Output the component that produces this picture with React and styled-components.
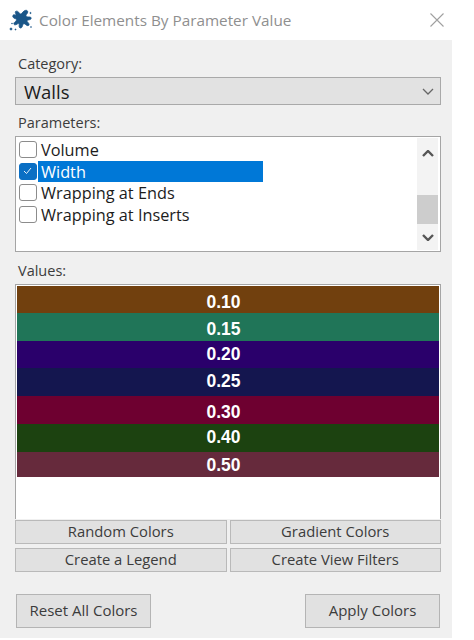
import React from 'react'
import styled, { createGlobalStyle } from 'styled-components'

const Global = createGlobalStyle`
  html, body {
    margin: 0;
    padding: 0;
    background: #fff;
  }
  body {
    font-family: 'Open Sans', 'Liberation Sans', sans-serif;
  }
`

const Page = styled.div`
  width: 474px;
  height: 640px;
  overflow: hidden;
  background: #fff;
`

const Window = styled.div`
  width: 452px;
`

const TitleBar = styled.div`
  height: 40px;
  display: flex;
  align-items: center;
  padding: 0 8px 0 9px;
`

const Title = styled.span`
  margin-left: 6px;
  flex: 1;
  font-size: 15.3px;
  color: #8f8f8f;
  white-space: nowrap;
`

const Body = styled.div`
  height: 598px;
  box-sizing: border-box;
  background: #f0f0f0;
  padding: 15px 11px 0 15px;
  display: flex;
  flex-direction: column;
`

const Label = styled.div`
  height: 22px;
  flex-shrink: 0;
  line-height: 17px;
  padding-left: 3px;
  font-size: 14.5px;
  color: #3c3c3c;
`

const Combo = styled.div`
  height: 28px;
  flex-shrink: 0;
  box-sizing: border-box;
  border: 1.5px solid #a9a9a9;
  background: #e2e2e2;
  display: flex;
  align-items: center;
  justify-content: space-between;
  padding: 0 6px 0 8px;
  font-size: 18.5px;
  color: #1a1a1a;
  margin-bottom: 9px;
`

const ListBox = styled.div`
  height: 116px;
  flex-shrink: 0;
  box-sizing: border-box;
  border: 1.5px solid #a5a5a5;
  background: #fff;
  display: flex;
  margin-bottom: 10px;
`

const Items = styled.div`
  flex: 1;
  padding: 2px 0 0 2.5px;
`

const Item = styled.div`
  height: 21.6px;
  display: flex;
  align-items: center;
  font-size: 16.3px;
  color: #1c1c1c;
`

const Check = styled.span`
  width: 18px;
  height: 17px;
  box-sizing: border-box;
  border: 1px solid ${p => (p.$checked ? '#0a6fc4' : '#8c8c8c')};
  border-radius: 3px;
  background: ${p => (p.$checked ? '#0a6fc4' : '#fff')};
  display: flex;
  align-items: center;
  justify-content: center;
  margin-right: 1px;
`

const ItemText = styled.span`
  width: 225px;
  height: 100%;
  box-sizing: border-box;
  padding-left: 3.5px;
  line-height: 23px;
  white-space: nowrap;
  background: ${p => (p.$selected ? '#0078d7' : 'transparent')};
  color: ${p => (p.$selected ? '#fff' : 'inherit')};
`

const ScrollBar = styled.div`
  width: 21px;
  margin: 1px 2px 1.5px 0;
  padding-top: 3px;
  background: #f3f3f3;
  display: flex;
  flex-direction: column;
  align-items: center;
`

const ScrollArrow = styled.div`
  height: 24px;
  display: flex;
  align-items: center;
`

const ScrollThumb = styled.div`
  width: 100%;
  height: 29px;
  margin: 30px 0 auto;
  background: #cdcdcd;
`

const ValuesBox = styled.div`
  height: 235px;
  flex-shrink: 0;
  box-sizing: border-box;
  border: 1.5px solid #a5a5a5;
  border-bottom: none;
  background: #fff;
  padding: 0.5px 1.5px 0 0.5px;
  margin-bottom: 1px;
  display: flex;
  flex-direction: column;
`

const ValueRow = styled.div`
  height: ${p => p.$height}px;
  box-sizing: border-box;
  padding-right: 8px;
  padding-top: ${p => p.$nudge}px;
  background: ${p => p.$color};
  color: #fff;
  font-family: 'Liberation Sans', Arial, sans-serif;
  font-weight: bold;
  font-size: 17.5px;
  display: flex;
  align-items: center;
  justify-content: center;
  flex-shrink: 0;
`

const ButtonGrid = styled.div`
  display: grid;
  grid-template-columns: 1fr 1fr;
  gap: 4px 3px;
`

const GridButton = styled.div`
  height: 24px;
  box-sizing: border-box;
  border: 1px solid #b9b9b9;
  padding-bottom: 2px;
  background: #e1e1e1;
  display: flex;
  align-items: center;
  justify-content: center;
  font-size: 14.8px;
  color: #3c3c3c;
`

const Footer = styled.div`
  display: flex;
  justify-content: space-between;
  margin-top: 22px;
  padding: 0 1px;
`

const FooterButton = styled(GridButton)`
  width: 135px;
  height: 34px;
  border: 1.5px solid #b4b4b4;
  font-size: 15px;
`

const SplatIcon = () => (
  <svg width="24" height="24" viewBox="0 0 24 24" fill="#1a5688" stroke="#1a5688" strokeWidth="0.8">
    <path d="M6.500 3.500c1.500-1 3 .2 3.800 1.600.8 1.200 1.700 1.200 2.500.2 1.200-1.500 3-3.500 5-2.900 1.600.6 1 2.500-.1 3.700-1 1.100-1 2.200.2 2.700 1.400.5 4-.5 4.300 1.200.2 1.500-1.800 1.800-3.100 2-1.200.2-1.400 1.100-.6 2 1 1 2.200 2.300 1.300 3.300-1 1-2.500-.2-3.600-1.100-1.100-.9-2-.7-2.400.6-.4 1.300-.7 3.300-2.400 3.200-1.500-.2-1.300-2-1.200-3.300.1-1.200-.8-1.500-1.800-.8-1 .7-2.700 1.500-3.400.4-.7-1.200.8-2.300 1.800-3.100 1-.9.900-1.800-.1-2.400C4.300 10.300 3.100 8.500 4 7.300c.8-1 2-.4 2.900-.1.600-.8-1.200-2.500-.4-3.700z" />
    <circle cx="2" cy="21" r="1" />
    <circle cx="6.500" cy="21.500" r="0.500" />
    <circle cx="21.500" cy="5" r="0.600" />
    <circle cx="3" cy="15.500" r="0.400" />
    <circle cx="22" cy="19" r="0.400" />
  </svg>
)

const CloseIcon = () => (
  <svg width="14" height="14" viewBox="0 0 14 14" stroke="#a0a0a0" strokeWidth="1.1" fill="none">
    <path d="M.5.500l13 13M13.500.500l-13 13" />
  </svg>
)

const Chevron = ({ up, color = '#555', width = 1.5 }) => (
  <svg width="12" height="7" viewBox="0 0 12 7" fill="none" stroke={color} strokeWidth={width}>
    <path d={up ? 'M1 6l5-5 5 5' : 'M1 1l5 5 5-5'} />
  </svg>
)

const params = [
  { name: 'Volume' },
  { name: 'Width', checked: true },
  { name: 'Wrapping at Ends' },
  { name: 'Wrapping at Inserts' }
]

const values = [
  { label: '0.10', color: '#71400e', height: 27, nudge: 6 },
  { label: '0.15', color: '#207558', height: 28, nudge: 6 },
  { label: '0.20', color: '#2a006b', height: 27, nudge: 1 },
  { label: '0.25', color: '#14164f', height: 28, nudge: 0 },
  { label: '0.30', color: '#6e0030', height: 28, nudge: 5 },
  { label: '0.40', color: '#1c4210', height: 28, nudge: 0 },
  { label: '0.50', color: '#662a3c', height: 25, nudge: 2 }
]

export default function App() {
  return (
    <Page>
      <Global />
      <Window>
        <TitleBar>
          <SplatIcon />
          <Title>Color Elements By Parameter Value</Title>
          <CloseIcon />
        </TitleBar>
        <Body>
          <Label>Category:</Label>
          <Combo>
            Walls
            <Chevron color="#666" width={1.3} />
          </Combo>
          <Label>Parameters:</Label>
          <ListBox>
            <Items>
              {params.map(p => (
                <Item key={p.name}>
                  <Check $checked={p.checked}>
                    {p.checked && (
                      <svg width="9" height="8" viewBox="0 0 9 8" fill="none" stroke="#fff" strokeWidth="0.9">
                        <path d="M1 4l2.500 2.500L8 1" />
                      </svg>
                    )}
                  </Check>
                  <ItemText $selected={p.checked}>{p.name}</ItemText>
                </Item>
              ))}
            </Items>
            <ScrollBar>
              <ScrollArrow>
                <Chevron up width={2.4} />
              </ScrollArrow>
              <ScrollThumb />
              <ScrollArrow>
                <Chevron width={2.4} />
              </ScrollArrow>
            </ScrollBar>
          </ListBox>
          <Label>Values:</Label>
          <ValuesBox>
            {values.map(v => (
              <ValueRow key={v.label} $color={v.color} $height={v.height} $nudge={v.nudge}>
                {v.label}
              </ValueRow>
            ))}
          </ValuesBox>
          <ButtonGrid>
            <GridButton>Random Colors</GridButton>
            <GridButton>Gradient Colors</GridButton>
            <GridButton>Create a Legend</GridButton>
            <GridButton>Create View Filters</GridButton>
          </ButtonGrid>
          <Footer>
            <FooterButton>Reset All Colors</FooterButton>
            <FooterButton>Apply Colors</FooterButton>
          </Footer>
        </Body>
      </Window>
    </Page>
  )
}
